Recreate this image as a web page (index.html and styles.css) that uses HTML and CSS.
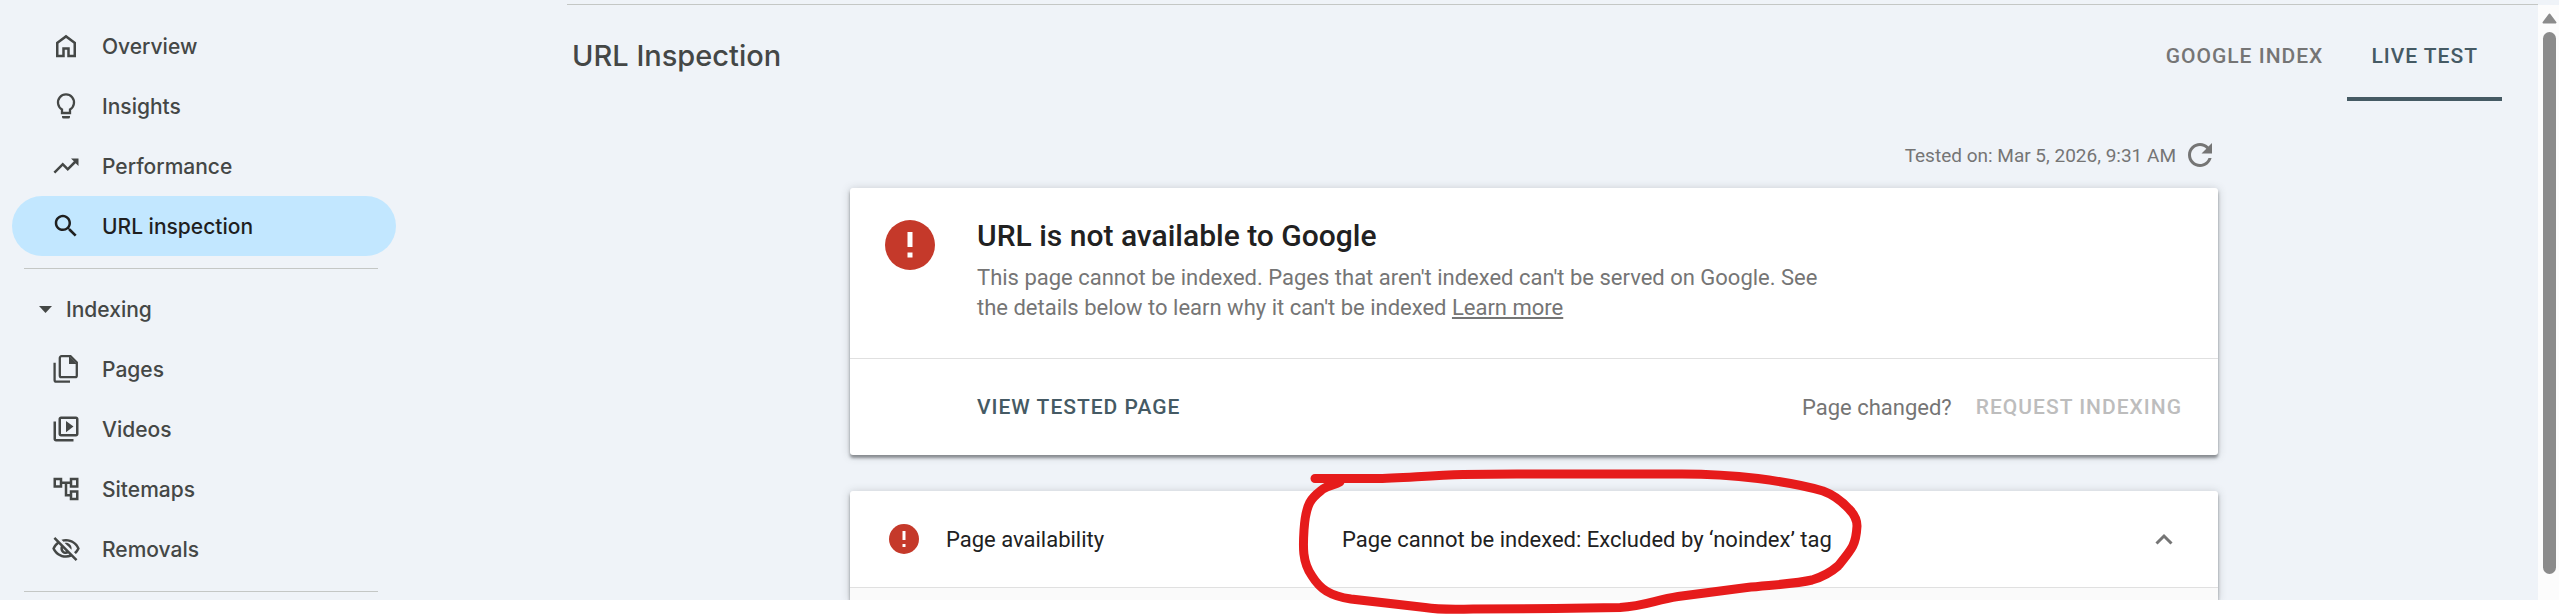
FILE: index.html
```
<!DOCTYPE html>
<html lang="en">
<head>
  <meta charset="UTF-8" />
  <meta name="viewport" content="width=device-width, initial-scale=1.0" />
  <title>URL Inspection</title>
  <link rel="stylesheet" href="styles.css">
</head>
<body>
  <div class="app">
    <nav class="sidebar">
      <a class="nav-item" href="#overview">
        <svg class="icon" viewBox="0 -960 960 960"><path d="M240-200h120v-240h240v240h120v-360L480-740 240-560v360Zm-80 80v-480l320-240 320 240v480H520v-240h-80v240H160Z"/></svg>
        Overview
      </a>
      <a class="nav-item" href="#insights">
        <svg class="icon" viewBox="0 0 30 30"><path d="M11 22h8v-3.600a8 8 0 1 0-8 0z" fill="none" stroke="currentColor" stroke-width="2.300"/><path d="M11 25h8v1a1.500 1.500 0 0 1-1.500 1.500h-5a1.500 1.500 0 0 1-1.500-1.500z"/></svg>
        Insights
      </a>
      <a class="nav-item" href="#performance">
        <svg class="icon" viewBox="0 0 24 24"><path d="M16 6l2.290 2.290-4.880 4.880-4-4L2 16.590 3.410 18l6-6 4 4 6.300-6.290L22 12V6z"/></svg>
        Performance
      </a>
      <a class="nav-item active" href="#inspection">
        <svg class="icon" viewBox="0 0 24 24"><path d="M15.500 14h-.790l-.280-.270C15.410 12.590 16 11.110 16 9.500 16 5.910 13.090 3 9.500 3S3 5.910 3 9.500 5.910 16 9.500 16c1.610 0 3.090-.590 4.230-1.570l.270.280v.790l5 4.990L20.490 19l-4.990-5zm-6 0C7.010 14 5 11.990 5 9.500S7.010 5 9.500 5 14 7.010 14 9.500 11.990 14 9.500 14z"/></svg>
        URL inspection
      </a>
      <hr class="nav-divider" />
      <button class="nav-group" type="button">
        <svg class="caret" viewBox="0 0 13 7"><path d="M0 0h13L6.500 7z"/></svg>
        Indexing
      </button>
      <a class="nav-item" href="#pages">
        <svg class="icon" viewBox="0 0 30 30"><path d="M10.500 2.200h9l6.300 6.300v13a1.700 1.700 0 0 1-1.700 1.700H10.500a1.700 1.700 0 0 1-1.700-1.700V3.900a1.700 1.700 0 0 1 1.700-1.700zM3.600 8.700v17.200a1.700 1.700 0 0 0 1.700 1.700H19" fill="none" stroke="currentColor" stroke-width="2.300"/><path d="M18 2v8h8z"/></svg>
        Pages
      </a>
      <a class="nav-item" href="#videos">
        <svg class="icon" viewBox="0 0 24 24"><path d="M4 6H2v14c0 1.100.900 2 2 2h14v-2H4V6zm16-4H8c-1.100 0-2 .900-2 2v12c0 1.100.900 2 2 2h12c1.100 0 2-.900 2-2V4c0-1.100-.900-2-2-2zm0 14H8V4h12v12zM12 5.500v9l6-4.500z"/></svg>
        Videos
      </a>
      <a class="nav-item" href="#sitemaps">
        <svg class="icon" viewBox="0 0 24 24"><path d="M22 11V3h-7v3H9V3H2v8h7V8h2v10h4v3h7v-8h-7v3h-2V8h2v3h7zM7 9H4V5h3v4zm10 6h3v4h-3v-4zm0-10h3v4h-3V5z"/></svg>
        Sitemaps
      </a>
      <a class="nav-item" href="#removals">
        <svg class="icon" viewBox="0 0 24 24"><path d="M12 6c3.790 0 7.170 2.130 8.820 5.500-.590 1.220-1.420 2.270-2.410 3.120l1.410 1.410c1.390-1.230 2.490-2.770 3.180-4.530C21.270 7.110 17 4 12 4c-1.270 0-2.490.200-3.640.570l1.650 1.650C10.660 6.090 11.320 6 12 6zm-1.070 1.140L13 9.210c.570.250 1.030.710 1.280 1.280l2.070 2.070c.080-.340.140-.700.140-1.070C16.500 9.010 14.480 7 12 7c-.370 0-.720.050-1.070.140zM2.010 3.870l2.680 2.680C3.060 7.830 1.770 9.530 1 11.500 2.730 15.890 7 19 12 19c1.520 0 2.980-.290 4.320-.820l3.420 3.420 1.410-1.410L3.420 2.450 2.010 3.870zm7.500 7.500l2.610 2.610c-.040.010-.080.020-.120.020-1.380 0-2.500-1.120-2.500-2.500 0-.050.010-.080.010-.130zm-3.400-3.400l1.750 1.750c-.230.550-.360 1.150-.360 1.780 0 2.480 2.020 4.500 4.500 4.500.630 0 1.230-.130 1.770-.360l.980.980c-.880.240-1.800.380-2.750.380-3.790 0-7.170-2.130-8.820-5.500.700-1.430 1.720-2.610 2.930-3.530z"/></svg>
        Removals
      </a>
      <hr class="nav-divider" />
    </nav>

    <main class="main">
      <header class="header">
        <h1>URL Inspection</h1>
        <div class="tabs" role="tablist">
          <button class="tab" type="button" role="tab" aria-selected="false">GOOGLE INDEX</button>
          <button class="tab selected" type="button" role="tab" aria-selected="true">LIVE TEST</button>
        </div>
      </header>

      <div class="report">
        <div class="tested">
          <span>Tested on: Mar 5, 2026, 9:31 AM</span>
          <button class="refresh" type="button" aria-label="Test again">
            <svg viewBox="0 0 24 24"><path d="M17.650 6.350C16.200 4.900 14.210 4 12 4c-4.420 0-7.990 3.580-7.990 8s3.570 8 7.990 8c3.730 0 6.840-2.550 7.730-6h-2.080c-.820 2.330-3.040 4-5.650 4-3.310 0-6-2.690-6-6s2.690-6 6-6c1.660 0 3.140.690 4.220 1.780L13 11h7V4l-2.350 2.350z"/></svg>
          </button>
        </div>

        <section class="card">
          <div class="verdict">
            <svg class="error-large" viewBox="0 0 50 50"><circle cx="25" cy="25" r="25"/><path d="M22.500 12h5v15h-5zM22.500 32.500h5v5h-5z" fill="#fff"/></svg>
            <div>
              <h2>URL is not available to Google</h2>
              <p>This page cannot be indexed. Pages that aren't indexed can't be served on Google. See the details below to learn why it can't be indexed <a href="#help">Learn more</a></p>
            </div>
          </div>
          <div class="actions">
            <button class="action" type="button">VIEW TESTED PAGE</button>
            <span class="changed">Page changed?</span>
            <button class="action" type="button" disabled>REQUEST INDEXING</button>
          </div>
        </section>

        <section class="card details">
          <div class="row">
            <svg class="error-small" viewBox="0 0 30 30"><circle cx="15" cy="15" r="15"/><path d="M13.500 7h3v9h-3zM13.500 20h3v3h-3z" fill="#fff"/></svg>
            <span class="row-name">Page availability</span>
            <span class="row-value">Page cannot be indexed: Excluded by ‘noindex’ tag</span>
            <button class="collapse" type="button" aria-label="Collapse">
              <svg viewBox="0 0 18 12"><path d="M1.500 10.500L9 3l7.500 7.500" fill="none" stroke="currentColor" stroke-width="3"/></svg>
            </button>
          </div>
          <div class="row-body"></div>
          <!-- hand-drawn ring round the indexing result -->
          <svg class="ring" viewBox="1295 465 575 150"><path d="M1315 478.500H1375C1400 478 1430 475.500 1463 474.500Q1490 474 1517 474H1682Q1720 474 1758 478.500Q1800 484 1823 491Q1837 496 1849 509Q1857 517 1857 526C1856 545 1852 549 1838 566C1830 573 1822 577 1812 580C1795 584 1770 585 1747 587.500L1678 596.500C1655 600 1645 606 1620 607.500L1555 608.500L1473 609Q1440 610 1425 607.500L1351 599C1330 596 1320 589 1312 576C1302 562 1303 546 1304 530C1306 500 1313 497 1323 489C1329 485 1335 485 1340 482"/></svg>
        </section>
      </div>
    </main>

    <div class="scrollbar">
      <svg class="scroll-up" viewBox="0 0 15 11"><path d="M7.500 1.500L13.500 9.500h-12z"/></svg>
      <div class="scroll-thumb"></div>
    </div>
  </div>
  <div class="page-end"></div>
</body>
</html>
```
FILE: styles.css
```
* {
  box-sizing: border-box;
}
body {
  margin: 0;
  background: #fff;
  color: #212121;
  font-family: Roboto, sans-serif;
  font-size: 22px;
}
h1, h2, p {
  margin: 0;
}
button {
  padding: 0;
  border: 0;
  background: none;
  color: inherit;
  font-family: inherit;
}
svg {
  display: block;
  flex: none;
  fill: currentColor;
}
.app {
  display: flex;
  background: #eff3f8;
}

/* sidebar */
.sidebar {
  width: 530px;
  flex: none;
  padding: 16px 0 8px 12px;
  color: #444746;
}
.nav-item, .nav-group {
  display: flex;
  align-items: center;
  width: 384px;
  height: 60px;
  font-family: Inter, sans-serif;
  font-size: 21px;
  font-weight: 500;
}
.nav-item {
  gap: 21px;
  padding-left: 39px;
  border-radius: 30px;
  color: inherit;
  text-decoration: none;
}
.nav-item.active {
  background: #c2e7ff;
  color: #1f1f1f;
}
.nav-group {
  gap: 14px;
  padding-left: 27px;
}
.icon {
  width: 30px;
  height: 30px;
}
.caret {
  width: 13px;
  height: 7px;
}
.nav-divider {
  width: 354px;
  margin: 12px 12px 10px;
  border: 0;
  border-top: 1px solid #c4c7c5;
}
.nav-divider:last-child {
  margin-bottom: 0;
}

/* main column */
.main {
  display: flex;
  flex: 1;
  flex-direction: column;
  padding-top: 4px;
}
.header {
  display: flex;
  justify-content: space-between;
  margin-left: 37px;
  padding: 0 36px 0 5px;
  border-top: 1px solid #c4c7c5;
}
h1 {
  color: #444746;
  font-family: Inter, sans-serif;
  font-size: 29px;
  font-weight: 500;
  line-height: 102px;
}
.tabs {
  display: flex;
}
.tab {
  height: 96px;
  padding: 10px 24px 0;
  border-bottom: 4px solid transparent;
  color: #757575;
  font-size: 21px;
  font-weight: 500;
  letter-spacing: 1px;
}
.tab.selected {
  border-color: #455a64;
  color: #455a64;
}
.report {
  display: flex;
  flex: 1;
  flex-direction: column;
  width: 100%;
  max-width: 1368px;
  margin: 0 auto;
}
.tested {
  display: flex;
  align-items: center;
  justify-content: flex-end;
  gap: 6px;
  height: 36px;
  margin: 30px 0 15px;
  color: #757575;
  font-size: 19px;
}
.refresh svg {
  width: 36px;
  height: 36px;
}
.card {
  border-radius: 3px;
  background: #fff;
  box-shadow: 0 3px 3px rgba(60, 64, 67, 0.5), 0 1px 8px rgba(60, 64, 67, 0.25);
}
.verdict {
  display: flex;
  gap: 42px;
  height: 170px;
  padding: 32px 35px;
}
.error-large {
  width: 50px;
  height: 50px;
  color: #c5392a;
}
h2 {
  font-size: 30px;
  font-weight: 500;
  line-height: 32px;
}
.verdict p {
  max-width: 864px;
  margin-top: 11px;
  color: #757575;
  line-height: 30px;
}
.verdict a {
  color: inherit;
}
.actions {
  display: flex;
  align-items: center;
  gap: 24px;
  height: 97px;
  padding: 0 36px 0 127px;
  border-top: 1px solid #e0e0e0;
}
.action {
  color: #455a64;
  font-size: 21px;
  font-weight: 500;
  letter-spacing: 1px;
}
.action:disabled {
  color: #bdbdbd;
}
.changed {
  margin-left: auto;
  color: #757575;
}
.details {
  position: relative;
  display: flex;
  flex: 1;
  flex-direction: column;
  margin-top: 36px;
  border-radius: 3px 3px 0 0;
}
.row {
  display: flex;
  align-items: center;
  height: 97px;
  padding: 0 45px 0 39px;
  border-bottom: 1px solid #e0e0e0;
}
.error-small {
  width: 30px;
  height: 30px;
  color: #c5392a;
}
.row-name {
  width: 396px;
  margin-left: 27px;
}
.collapse {
  margin-left: auto;
  color: #757575;
}
.collapse svg {
  width: 18px;
  height: 12px;
}
.row-body {
  flex: 1;
  background: #fafafa;
}
.ring {
  position: absolute;
  z-index: 2;
  top: -26px;
  left: 445px;
  width: 575px;
  height: 150px;
  fill: none;
  stroke: #e61b1b;
  stroke-width: 9px;
  stroke-linecap: round;
}

/* scrollbar */
.scrollbar {
  display: flex;
  flex-direction: column;
  align-items: center;
  gap: 8px;
  width: 21px;
  margin-top: 5px;
  padding: 8px 0 26px 2px;
  background: #fcfcfc;
  color: #8b8b8b;
}
.scroll-up {
  width: 15px;
  height: 11px;
  stroke: currentColor;
  stroke-width: 2px;
  stroke-linejoin: round;
}
.scroll-thumb {
  flex: 1;
  width: 13px;
  border-radius: 7px;
  background: #8b8b8b;
}
.page-end {
  position: relative;
  z-index: 1;
  height: 15px;
  background: #fff;
}
```
